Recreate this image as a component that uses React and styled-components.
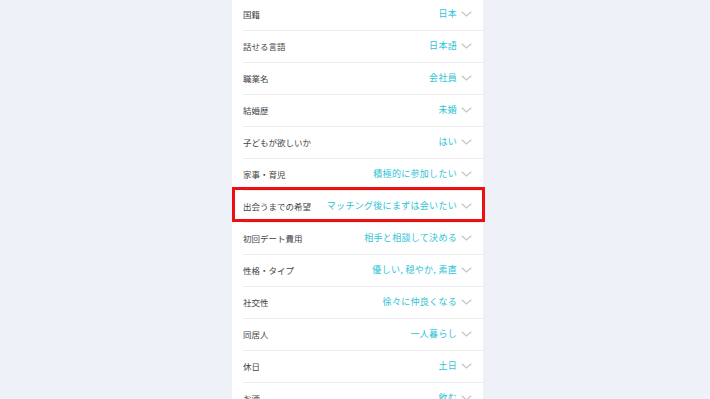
import React from 'react';
import styled, { createGlobalStyle } from 'styled-components';

const GlobalStyle = createGlobalStyle`
  html, body {
    margin: 0;
    padding: 0;
    background: #eef2f8;
    font-family: "Noto Sans CJK JP", "Noto Sans", sans-serif;
    overflow: hidden;
  }
`;

const Page = styled.div`
  height: 399px;
  display: flex;
  padding-left: 232px;
`;

const Panel = styled.div`
  width: 251px;
  background: #ffffff;
`;

const List = styled.div`
  margin-top: -1px;
  padding-left: 11px;
  display: flex;
  flex-direction: column;
`;

const Row = styled.div`
  position: relative;
  box-sizing: border-box;
  height: 32px;
  padding: 0 11px 2px 0;
  border-bottom: 1px solid #ececec;
  display: flex;
  align-items: center;
  justify-content: space-between;
  white-space: nowrap;

  ${props =>
    props.$highlight &&
    `
    &::after {
      content: '';
      position: absolute;
      left: -11px;
      right: -2px;
      top: -4px;
      bottom: 0;
      border: 3px solid #f00f0f;
    }
  `}
`;

const Label = styled.span`
  font-size: 8.5px;
  color: #444444;
`;

const ValueWrap = styled.div`
  display: flex;
  align-items: center;
  gap: 4px;
`;

const Value = styled.span`
  font-size: 9px;
  color: #2ec3d6;
  letter-spacing: 0.3px;
`;

const Chevron = () => (
  <svg width="11" height="6" viewBox="0 0 11 6" fill="none">
    <path d="M0.7 0.7 L5.5 5 L10.3 0.7" stroke="#c6c6c6" strokeWidth="1.3" />
  </svg>
);

const rows = [
  ['国籍', '日本'],
  ['話せる言語', '日本語'],
  ['職業名', '会社員'],
  ['結婚歴', '未婚'],
  ['子どもが欲しいか', 'はい'],
  ['家事・育児', '積極的に参加したい'],
  ['出会うまでの希望', 'マッチング後にまずは会いたい', true],
  ['初回デート費用', '相手と相談して決める'],
  ['性格・タイプ', '優しい, 穏やか, 素直'],
  ['社交性', '徐々に仲良くなる'],
  ['同居人', '一人暮らし'],
  ['休日', '土日'],
  ['お酒', '飲む'],
];

export default function App() {
  return (
    <>
      <GlobalStyle />
      <Page>
        <Panel>
          <List>
            {rows.map(([label, value, hl]) => (
              <Row key={label} $highlight={hl}>
                <Label>{label}</Label>
                <ValueWrap>
                  <Value>{value}</Value>
                  <Chevron />
                </ValueWrap>
              </Row>
            ))}
          </List>
        </Panel>
      </Page>
    </>
  );
}
